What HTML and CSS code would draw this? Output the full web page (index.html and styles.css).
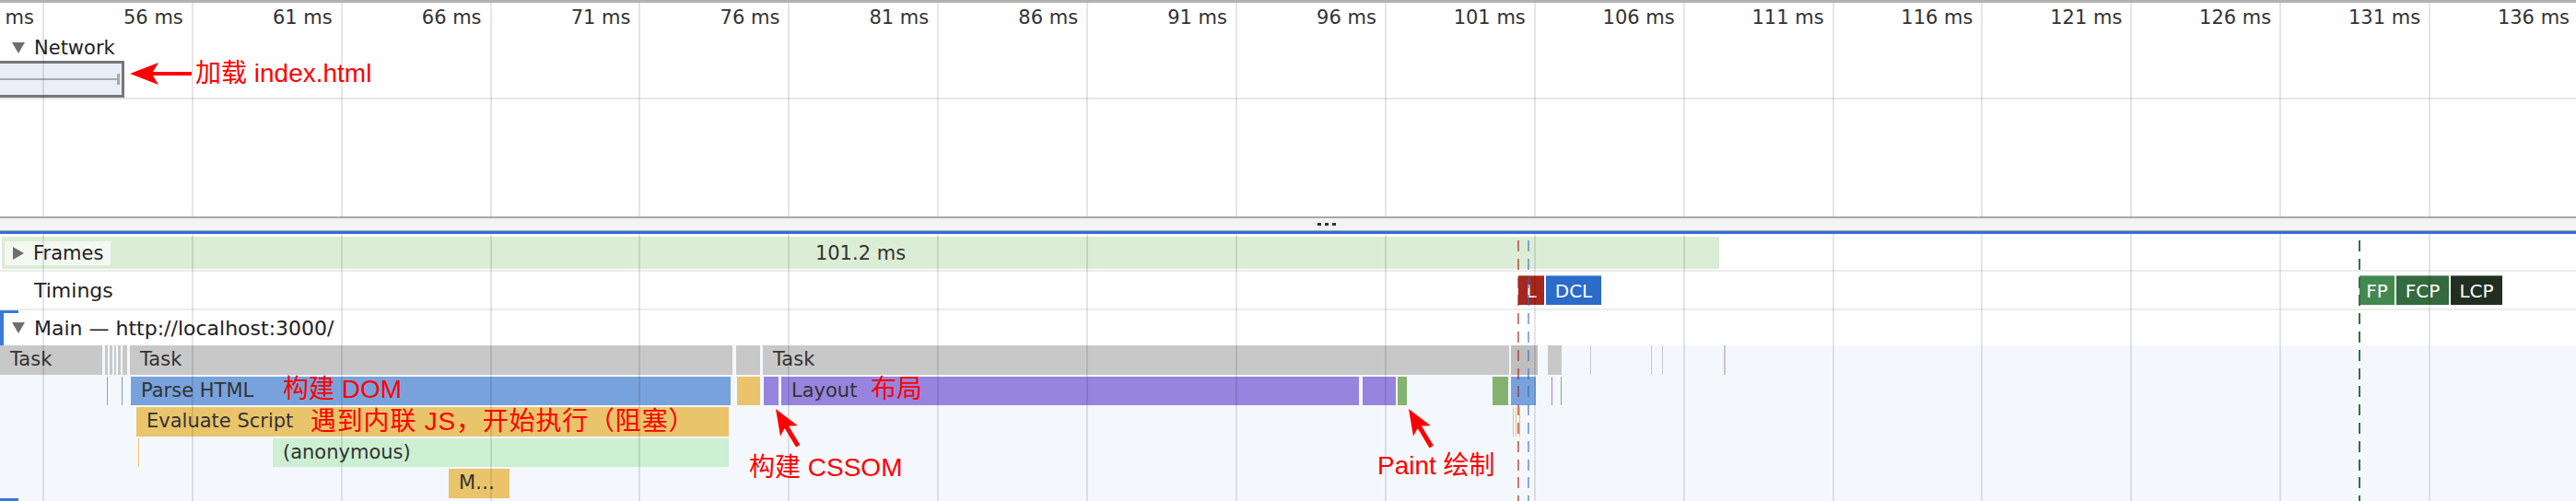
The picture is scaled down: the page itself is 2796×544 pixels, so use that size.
FILE: index.html
```html
<!DOCTYPE html>
<html lang="zh">
<head>
<meta charset="utf-8">
<title>Performance</title>
<link rel="stylesheet" href="styles.css">
</head>
<body>
<div class="app">
  <section class="pane top">
    <div class="grid"><i></i><i></i><i></i><i></i><i></i><i></i><i></i><i></i><i></i><i></i><i></i><i></i><i></i><i></i><i></i><i></i><i></i><i></i></div>
    <div class="ruler">
      <span>51 ms</span><span>56 ms</span><span>61 ms</span><span>66 ms</span><span>71 ms</span><span>76 ms</span><span>81 ms</span><span>86 ms</span><span>91 ms</span><span>96 ms</span><span>101 ms</span><span>106 ms</span><span>111 ms</span><span>116 ms</span><span>121 ms</span><span>126 ms</span><span>131 ms</span><span>136 ms</span>
    </div>
    <div class="track-head net-head"><svg class="tri" width="14" height="12" viewBox="0 0 14 12"><polygon points="0,0 14,0 7,12"/></svg>Network</div>
    <div class="net-row">
      <div class="req" style="left:-10px;width:145px"><div class="whisker"></div></div>
    </div>
    <div class="net-rest"></div>
    <svg class="arrow arrow-net" width="67" height="24" viewBox="0 0 67 24"><polygon points="0,12 31,0 25,10 67,10 67,14 25,14 31,24"/></svg>
    <span class="note note-net">加载 index.html</span>
  </section>

  <div class="divider"><span class="dots"><i></i><i></i><i></i></span></div>

  <section class="pane bottom">
    <div class="grid"><i></i><i></i><i></i><i></i><i></i><i></i><i></i><i></i><i></i><i></i><i></i><i></i><i></i><i></i><i></i><i></i><i></i><i></i></div>

    <div class="frames-row">
      <div class="frame-band">
        <span class="frames-label"><svg class="tri" width="12" height="14" viewBox="0 0 12 14"><polygon points="0,0 12,7 0,14"/></svg>Frames</span>
        <span class="frame-time">101.2 ms</span>
      </div>
    </div>

    <div class="timings-row">
      <span class="track-title">Timings</span>
      <span class="mark m-l" style="left:1648px;width:28px">L</span>
      <span class="mark m-dcl" style="left:1678px;width:60px">DCL</span>
      <span class="mark m-fp" style="left:2561px;width:38px">FP</span>
      <span class="mark m-fcp" style="left:2601px;width:57px">FCP</span>
      <span class="mark m-lcp" style="left:2660px;width:56px">LCP</span>
    </div>

    <div class="main-group">
      <div class="track-head main-head"><svg class="tri" width="14" height="12" viewBox="0 0 14 12"><polygon points="0,0 14,0 7,12"/></svg>Main — http://localhost:3000/</div>
      <div class="flame">
        <div class="frow">
          <div class="b task" style="left:0;width:111px">Task</div>
          <div class="b task" style="left:114px;width:3px"></div>
          <div class="b task" style="left:119px;width:3px"></div>
          <div class="b task" style="left:124px;width:2px"></div>
          <div class="b task" style="left:128px;width:3px"></div>
          <div class="b task" style="left:133px;width:5px"></div>
          <div class="b task" style="left:141px;width:654px">Task</div>
          <div class="b task" style="left:799px;width:26px"></div>
          <div class="b task" style="left:828px;width:810px">Task</div>
          <div class="b task dark" style="left:1640px;width:29px"></div>
          <div class="b task" style="left:1680px;width:15px"></div>
          <div class="b task" style="left:1726px;width:1px"></div>
          <div class="b task" style="left:1792px;width:1px"></div>
          <div class="b task" style="left:1804px;width:1px"></div>
          <div class="b task" style="left:1871px;width:2px"></div>
        </div>
        <div class="frow">
          <div class="b parse" style="left:116px;width:1px"></div>
          <div class="b parse" style="left:132px;width:1px"></div>
          <div class="b parse" style="left:142px;width:651px">Parse HTML</div>
          <div class="b script" style="left:800px;width:25px"></div>
          <div class="b layout" style="left:829px;width:16px"></div>
          <div class="b layout" style="left:848px;width:627px">Layout</div>
          <div class="b layout" style="left:1479px;width:36px"></div>
          <div class="b paint" style="left:1517px;width:10px"></div>
          <div class="b paint" style="left:1620px;width:17px"></div>
          <div class="b parse" style="left:1640px;width:27px"></div>
          <div class="b layout" style="left:1684px;width:1px"></div>
          <div class="b paint" style="left:1694px;width:1px"></div>
        </div>
        <div class="frow">
          <div class="b script" style="left:148px;width:643px">Evaluate Script</div>
          <div class="b script" style="left:1642px;width:1px"></div>
          <div class="b script" style="left:1645px;width:1px"></div>
          <div class="b script" style="left:1649px;width:1px"></div>
        </div>
        <div class="frow">
          <div class="b script" style="left:150px;width:1px"></div>
          <div class="b anon" style="left:296px;width:495px">(anonymous)</div>
        </div>
        <div class="frow">
          <div class="b script" style="left:487px;width:66px">M…</div>
        </div>
      </div>
    </div>

    <span class="dash d-red" style="left:1647px"></span>
    <span class="dash d-blue" style="left:1658px"></span>
    <span class="dash d-green" style="left:2560px"></span>

    <span class="note" style="left:307px;top:155px">构建 DOM</span>
    <span class="note" style="left:945px;top:155px">布局</span>
    <span class="note note-wide" style="left:337px;top:190px">遇到内联 JS，开始执行（阻塞）</span>
    <svg class="arrow arrow-css" width="60" height="60" viewBox="0 0 60 60"><g transform="translate(17 10) rotate(59)"><polygon points="0,0 28,-11 23,-2.5 47,-2.5 47,2.5 23,2.5 28,11"/></g></svg>
    <span class="note" style="left:813px;top:240px">构建 CSSOM</span>
    <svg class="arrow arrow-paint" width="60" height="60" viewBox="0 0 60 60"><g transform="translate(17 10) rotate(59)"><polygon points="0,0 28,-11 23,-2.5 48,-2.5 48,2.5 23,2.5 28,11"/></g></svg>
    <span class="note" style="left:1495px;top:238px">Paint 绘制</span>
  </section>
</div>
</body>
</html>
```

FILE: styles.css
```css
* { box-sizing: border-box; margin: 0; padding: 0; }

html, body {
  width: 2796px;
  height: 544px;
  overflow: hidden;
  background: #fff;
}

body {
  font-family: "DejaVu Sans", "Noto Sans", sans-serif;
  font-size: 20px;
  color: #222;
}

.app {
  width: 2796px;
  height: 544px;
  display: flex;
  flex-direction: column;
}

.pane {
  position: relative;
  overflow: hidden;
}

/* ---------- vertical grid lines (one cell per 5 ms) ---------- */
.grid {
  position: absolute;
  top: 0;
  bottom: 0;
  left: -114px;
  display: flex;
  pointer-events: none;
  z-index: 6;
}
.grid i {
  flex: 0 0 161.9px;
  border-right: 2px solid rgba(0, 0, 0, 0.1);
}

/* ---------- top pane ---------- */
.top {
  height: 235px;
  border-top: 3px solid #b2b2b2;
  display: flex;
  flex-direction: column;
}

.ruler {
  height: 35px;
  margin-left: -114px;
  display: flex;
  flex: none;
}
.ruler span {
  flex: 0 0 161.9px;
  text-align: right;
  padding-right: 11px;
  line-height: 32px;
  font-size: 21px;
  color: #333;
  white-space: nowrap;
}

.track-head {
  display: flex;
  align-items: center;
  padding-left: 13px;
  font-size: 21px;
  color: #222;
  white-space: nowrap;
}
.tri {
  fill: #6e6e6e;
  margin-right: 10px;
  flex: none;
}

.net-head {
  height: 28px;
  flex: none;
}

.net-row {
  position: relative;
  height: 40px;
  flex: none;
  border-bottom: 2px solid #e7e7e7;
  box-sizing: content-box;
}
.req {
  position: absolute;
  top: 0;
  bottom: 0;
  background: #e9eef8;
  border: 3px solid #777;
}
.whisker {
  position: absolute;
  left: 0;
  right: 2px;
  top: 16px;
  height: 2px;
  background: #a9a9a9;
}
.whisker::after {
  content: "";
  position: absolute;
  right: 0;
  top: -5px;
  width: 3px;
  height: 12px;
  background: #a9a9a9;
}

.net-rest { flex: 1; }

/* ---------- annotations ---------- */
.note {
  position: absolute;
  z-index: 10;
  font-family: "Liberation Sans", "Noto Sans CJK SC", sans-serif;
  font-size: 28px;
  line-height: 28px;
  color: #ff0000;
  white-space: nowrap;
}
.note-net { left: 212px; top: 63px; }
.note-wide { letter-spacing: 0.8px; }

.arrow {
  position: absolute;
  z-index: 10;
  fill: #ff0000;
  overflow: visible;
}
.arrow-net { left: 141px; top: 65px; }
.arrow-css { left: 825px; top: 180px; }
.arrow-paint { left: 1512px; top: 180px; }

/* ---------- divider ---------- */
.divider {
  height: 19px;
  flex: none;
  background: #f3f3f3;
  border-top: 2px solid #a7a7a7;
  border-bottom: 3px solid #2f6fd6;
  box-shadow: inset 0 -1px 0 #a7a7a7;
  display: flex;
  align-items: center;
  padding-left: 1430px;
  padding-bottom: 1px;
}
.dots {
  display: flex;
  gap: 4px;
}
.dots i {
  width: 4px;
  height: 3px;
  background: #333;
}

/* ---------- bottom pane ---------- */
.bottom {
  flex: 1;
  display: flex;
  flex-direction: column;
}

.frames-row {
  height: 41px;
  flex: none;
  padding-top: 3px;
  border-bottom: 2px solid #ececec;
}
.frame-band {
  position: relative;
  margin-left: 2px;
  width: 1864px;
  height: 35px;
  background: #dcedd5;
  display: flex;
  align-items: center;
  justify-content: center;
}
.frames-label {
  position: absolute;
  left: 3px;
  top: 5px;
  height: 26px;
  width: 115px;
  padding-left: 9px;
  display: flex;
  align-items: center;
  background: #f3f8f1;
  font-size: 21px;
  color: #222;
}
.frame-time {
  font-size: 21px;
  color: #333;
}

.timings-row {
  position: relative;
  height: 42px;
  flex: none;
  border-bottom: 2px solid #ececec;
  display: flex;
  align-items: center;
  padding-left: 37px;
}
.track-title {
  font-size: 22px;
  color: #222;
}
.mark {
  position: absolute;
  top: 4px;
  height: 32px;
  z-index: 4;
  color: #fff;
  font-size: 20px;
  line-height: 32px;
  text-align: center;
  border-top: 1px solid rgba(255, 255, 255, 0.35);
}
.m-l { background: #a4271d; }
.m-dcl { background: #2b6bc9; }
.m-fp { background: #42884f; }
.m-fcp { background: #336a3e; }
.m-lcp { background: #212f21; }

.main-group {
  position: relative;
  flex: 1;
  display: flex;
  flex-direction: column;
  border-left: 4px solid #3a78da;
}
.main-group::before,
.main-group::after {
  content: "";
  position: absolute;
  left: -4px;
  width: 20px;
  height: 3px;
  background: #3a78da;
}
.main-group::before { top: 0; }
.main-group::after { bottom: 0; }

.main-head {
  height: 38px;
  flex: none;
  padding-left: 9px;
  font-size: 22px;
}

.flame {
  flex: 1;
  margin-left: -4px;
  background: #f4f7fc;
  display: flex;
  flex-direction: column;
  gap: 2px;
}
.frow {
  position: relative;
  height: 31.5px;
  flex: none;
}
.b {
  position: absolute;
  top: 0;
  bottom: 0;
  text-indent: 11px;
  font-size: 21px;
  line-height: 31.5px;
  color: #333;
  white-space: nowrap;
  overflow: hidden;
}
.task { background: #c8c8c8; }
.task.dark { background: #bfbfbf; }
.parse { background: #78a2dc; }
.script { background: #e9c46b; }
.anon { background: #cdefd2; }
.layout { background: #9784de; }
.paint { background: #84b371; }

.dash {
  position: absolute;
  top: 7px;
  bottom: 0;
  width: 2px;
  z-index: 5;
}
.d-red {
  background: repeating-linear-gradient(to bottom, rgba(164, 38, 29, 0.6) 0 12px, transparent 12px 19.8px);
}
.d-blue {
  background: repeating-linear-gradient(to bottom, rgba(43, 107, 201, 0.55) 0 12px, transparent 12px 19.8px);
}
.d-green {
  background: repeating-linear-gradient(to bottom, #3b6b46 0 12px, transparent 12px 19.8px);
}
```
